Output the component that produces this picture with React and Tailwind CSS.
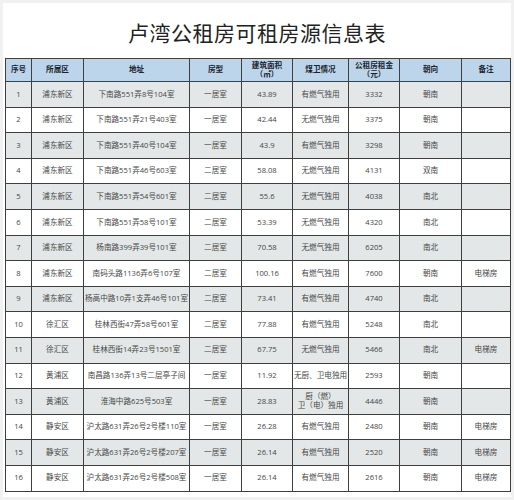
import React from "react";

const rows = [
  ["1", "浦东新区", "下南路551弄8号104室", "一居室", "43.89", "有燃气独用", "3332", "朝南", ""],
  ["2", "浦东新区", "下南路551弄21号403室", "一居室", "42.44", "无燃气独用", "3375", "朝南", ""],
  ["3", "浦东新区", "下南路551弄40号104室", "一居室", "43.9", "有燃气独用", "3298", "朝南", ""],
  ["4", "浦东新区", "下南路551弄46号603室", "二居室", "58.08", "无燃气独用", "4131", "双南", ""],
  ["5", "浦东新区", "下南路551弄54号601室", "二居室", "55.6", "无燃气独用", "4038", "南北", ""],
  ["6", "浦东新区", "下南路551弄58号101室", "二居室", "53.39", "无燃气独用", "4320", "南北", ""],
  ["7", "浦东新区", "杨南路399弄39号101室", "二居室", "70.58", "无燃气独用", "6205", "南北", ""],
  ["8", "浦东新区", "南码头路1136弄6号107室", "二居室", "100.16", "有燃气独用", "7600", "朝南", "电梯房"],
  ["9", "浦东新区", "杨高中路10弄1支弄46号101室", "二居室", "73.41", "有燃气独用", "4740", "南北", ""],
  ["10", "徐汇区", "桂林西街47弄58号601室", "二居室", "77.88", "有燃气独用", "5248", "南北", ""],
  ["11", "徐汇区", "桂林西街14弄23号1501室", "二居室", "67.75", "无燃气独用", "5466", "南北", "电梯房"],
  ["12", "黄浦区", "南昌路136弄13号二层亭子间", "一居室", "11.92", "无厨、卫电独用", "2593", "朝南", ""],
  ["13", "黄浦区", "淮海中路625号503室", "一居室", "28.83", "厨（燃）\n卫（电）独用", "4446", "朝南", ""],
  ["14", "静安区", "沪太路631弄26号2号楼110室", "一居室", "26.28", "有燃气独用", "2480", "朝南", "电梯房"],
  ["15", "静安区", "沪太路631弄26号2号楼207室", "一居室", "26.14", "有燃气独用", "2520", "朝南", "电梯房"],
  ["16", "静安区", "沪太路631弄26号2号楼508室", "一居室", "26.14", "有燃气独用", "2616", "朝南", "电梯房"],
];

const widths = ["w-[26px]", "w-[52px]", "w-[106px]", "w-[52px]", "w-[51px]", "w-[56px]", "w-[51px]", "w-[62px]", "w-[49px]"];

const App = () => {
  return (
    <div className="w-[514px] h-[500px] bg-[#f1f1f1] p-[3px] font-['Open_Sans','Noto_Sans_CJK_SC',sans-serif]">
      <div className="bg-white h-[494px] px-[2px]">
        <div className="h-[55px] flex items-center justify-center pt-[4px]">
          <h1 className="text-[21px] leading-none text-[#222] tracking-[0.5px] font-['Noto_Sans_CJK_SC',serif] font-normal">
            卢湾公租房可租房源信息表
          </h1>
        </div>
        <table className="w-[505px] table-fixed border-collapse text-center text-[7.6px] leading-[1.25]">
          <colgroup>
            {widths.map((w, i) => (
              <col key={i} className={w} />
            ))}
          </colgroup>
          {/* head */}
          <thead>
            <tr className="h-[23px] bg-[#bdd5ea] text-[#1a2430] font-bold">
              <th className="border border-[#3f3f3f]">序号</th>
              <th className="border border-[#3f3f3f]">所属区</th>
              <th className="border border-[#3f3f3f]">地址</th>
              <th className="border border-[#3f3f3f]">房型</th>
              <th className="border border-[#3f3f3f]">
                建筑面积
                <br />
                （㎡）
              </th>
              <th className="border border-[#3f3f3f]">煤卫情况</th>
              <th className="border border-[#3f3f3f]">
                公租房租金
                <br />
                （元）
              </th>
              <th className="border border-[#3f3f3f]">朝向</th>
              <th className="border border-[#3f3f3f]">备注</th>
            </tr>
          </thead>
          <tbody>
            {rows.map((r, i) => (
              <tr key={r[0]} className={`h-[25.6px] text-[#474747] ${i % 2 === 0 ? "bg-[#e3e7e8]" : "bg-white"}`}>
                {r.map((c, j) => (
                  <td key={j} className="border border-[#3f3f3f] whitespace-pre-line px-0">
                    {c}
                  </td>
                ))}
              </tr>
            ))}
          </tbody>
        </table>
      </div>
    </div>
  );
};

export default App;
